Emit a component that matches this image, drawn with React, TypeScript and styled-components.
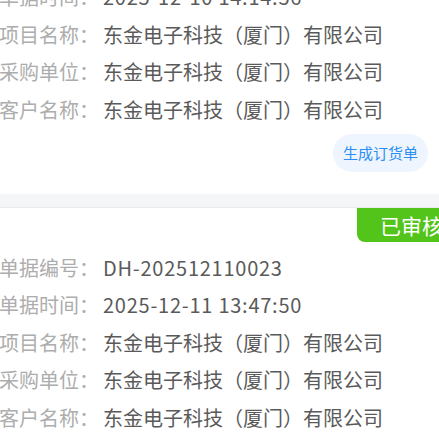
import React from "react";
import styled, { createGlobalStyle } from "styled-components";

const Global = createGlobalStyle`
  html, body {
    margin: 0;
    padding: 0;
    background: #ffffff;
    overflow: hidden;
  }
  body {
    font-family: "Noto Sans CJK SC", "Noto Sans", sans-serif;
  }
`;

const Page = styled.div`
  width: 467px;
  margin-left: -1px;
  margin-top: -21.75px;
  display: flex;
  flex-direction: column;
`;

const Card = styled.section<{ $pb?: number }>`
  background: #ffffff;
  display: flex;
  flex-direction: column;
  padding-bottom: ${(p) => p.$pb ?? 0}px;
`;

const Rows = styled.div<{ $mt?: number }>`
  display: flex;
  flex-direction: column;
  margin-top: ${(p) => p.$mt ?? 0}px;
`;

const Row = styled.div`
  display: flex;
  align-items: center;
  height: 37.5px;
  font-size: 20px;
  line-height: 37.5px;
  white-space: nowrap;
`;

const Label = styled.span`
  color: #adadad;
  margin-right: 4px;
`;

const Value = styled.span<{ $latin?: boolean }>`
  color: #5a5a5a;
  letter-spacing: ${(p) => (p.$latin ? "0.75px" : "0")};
`;

const Actions = styled.div`
  display: flex;
  justify-content: flex-end;
  margin-top: 5.75px;
  padding-right: 38px;
`;

const PillButton = styled.button`
  height: 38px;
  padding: 0 10px;
  border: none;
  border-radius: 19px;
  background: #eff5ff;
  color: #2a8ff4;
  font-family: "Noto Sans CJK SC", "Noto Sans", sans-serif;
  font-size: 15px;
  line-height: 38px;
  cursor: pointer;
`;

const Divider = styled.div`
  height: 13px;
  background: #f5f6f8;
  border-bottom: 1px solid #ebebeb;
`;

const Header = styled.div`
  display: flex;
  justify-content: flex-end;
`;

const Badge = styled.span`
  height: 34px;
  line-height: 34px;
  padding: 0 23px;
  background: #52c41a;
  color: #ffffff;
  font-size: 21px;
  border-bottom-left-radius: 8px;
`;

type Field = { label: string; value: string; latin?: boolean };

const company = "东金电子科技（厦门）有限公司";

const first: Field[] = [
  { label: "单据时间：", value: "2025-12-10 14:14:56", latin: true },
  { label: "项目名称：", value: company },
  { label: "采购单位：", value: company },
  { label: "客户名称：", value: company },
];

const second: Field[] = [
  { label: "单据编号：", value: "DH-202512110023", latin: true },
  { label: "单据时间：", value: "2025-12-11 13:47:50", latin: true },
  { label: "项目名称：", value: company },
  { label: "采购单位：", value: company },
  { label: "客户名称：", value: company },
];

const FieldList = ({ fields, mt }: { fields: Field[]; mt?: number }) => (
  <Rows $mt={mt}>
    {fields.map((f, i) => (
      <Row key={i}>
        <Label>{f.label}</Label>
        <Value $latin={f.latin}>{f.value}</Value>
      </Row>
    ))}
  </Rows>
);

export default function App() {
  return (
    <>
      <Global />
      <Page>
        <Card $pb={22}>
          <FieldList fields={first} />
          <Actions>
            <PillButton>生成订货单</PillButton>
          </Actions>
        </Card>
        <Divider />
        <Card>
          <Header>
            <Badge>已审核</Badge>
          </Header>
          <FieldList fields={second} mt={6.75} />
        </Card>
      </Page>
    </>
  );
}
